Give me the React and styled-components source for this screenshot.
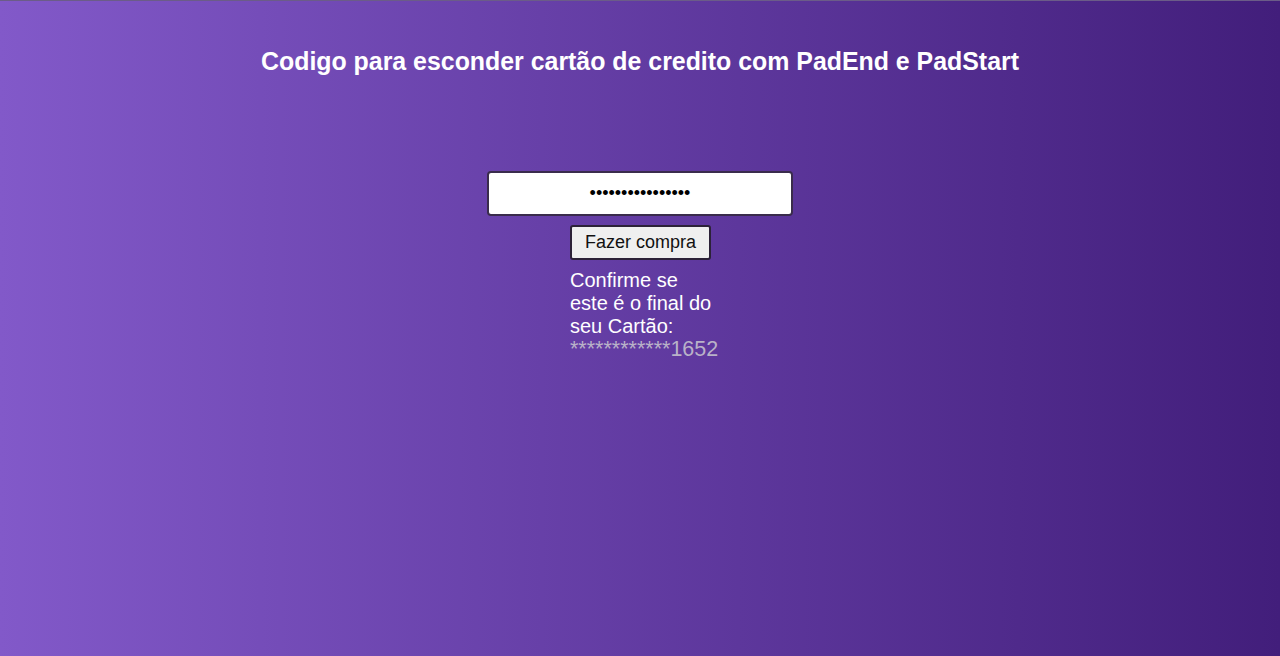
import React from "react";
import styled, { createGlobalStyle } from "styled-components";

const GlobalStyle = createGlobalStyle`
  html, body {
    margin: 0;
    padding: 0;
    height: 100%;
  }
  body {
    font-family: "Liberation Sans", Arial, sans-serif;
  }
`;

const StyledPage = styled.div`
  min-height: 656px;
  box-sizing: border-box;
  border-top: 1px solid #6b5c88;
  background: linear-gradient(to right, #8259c9, #421e7b);
  display: flex;
  flex-direction: column;
  align-items: center;
  color: #ffffff;
`;

const StyledTitle = styled.h1`
  margin: 46px 0 0;
  font-size: 24.9px;
  font-weight: bold;
  line-height: 29px;
`;

const StyledCardInput = styled.input`
  margin-top: 95px;
  width: 306px;
  height: 45px;
  box-sizing: border-box;
  border: 2px solid #3a2c4c;
  border-radius: 4px;
  background: #ffffff;
  font-family: "Liberation Sans", Arial, sans-serif;
  font-size: 18px;
  text-align: center;
  outline: none;
`;

const StyledColumn = styled.div`
  margin-top: 9px;
  margin-left: 2px;
  display: flex;
  flex-direction: column;
  align-items: flex-start;
`;

const StyledBuyButton = styled.button`
  padding: 5px 13px;
  border: 2px solid #2c2238;
  border-radius: 3px;
  background: #efefef;
  color: #111111;
  font-family: "Liberation Sans", Arial, sans-serif;
  font-size: 18px;
  line-height: 21px;
`;

const StyledResult = styled.p`
  margin: 9px 0 0;
  width: 142px;
  font-size: 20px;
  line-height: 23px;
`;

const StyledMasked = styled.span`
  color: #b9b2c8;
  font-size: 21.5px;
`;

const App = () => {
  return (
    <>
      <GlobalStyle />
      <StyledPage>
        <StyledTitle>
          Codigo para esconder cartão de credito com PadEnd e PadStart
        </StyledTitle>
        <StyledCardInput type="password" defaultValue="1234567812341652" />
        <StyledColumn>
          <StyledBuyButton>Fazer compra</StyledBuyButton>
          <StyledResult>
            Confirme se este é o final do seu Cartão:{" "}
            <StyledMasked>************1652</StyledMasked>
          </StyledResult>
        </StyledColumn>
      </StyledPage>
    </>
  );
};

export default App;
